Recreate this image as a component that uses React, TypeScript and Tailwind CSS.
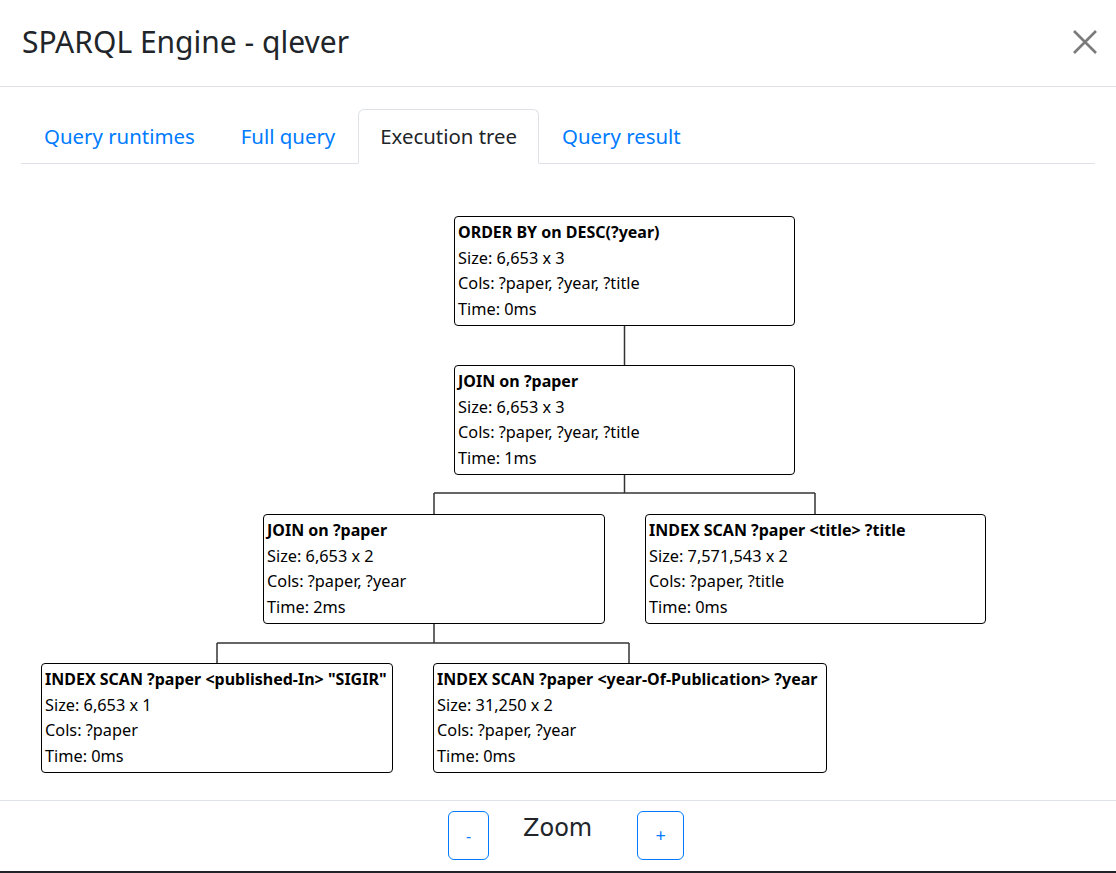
type TreeNode = {
  id: string;
  x: number;
  y: number;
  w: number;
  title: string;
  size: string;
  cols: string;
  time: string;
};

// positions are page-x and canvas-y (canvas starts right under the tab bar)
const nodes: TreeNode[] = [
  { id: "order", x: 454, y: 52, w: 341, title: "ORDER BY on DESC(?year)", size: "6,653 x 3", cols: "?paper, ?year, ?title", time: "0ms" },
  { id: "join1", x: 454, y: 201, w: 341, title: "JOIN on ?paper", size: "6,653 x 3", cols: "?paper, ?year, ?title", time: "1ms" },
  { id: "join2", x: 263, y: 350, w: 342, title: "JOIN on ?paper", size: "6,653 x 2", cols: "?paper, ?year", time: "2ms" },
  { id: "scan1", x: 645, y: 350, w: 341, title: "INDEX SCAN ?paper <title> ?title", size: "7,571,543 x 2", cols: "?paper, ?title", time: "0ms" },
  { id: "scan2", x: 41, y: 499, w: 352, title: 'INDEX SCAN ?paper <published-In> "SIGIR"', size: "6,653 x 1", cols: "?paper", time: "0ms" },
  { id: "scan3", x: 433, y: 499, w: 394, title: "INDEX SCAN ?paper <year-Of-Publication> ?year", size: "31,250 x 2", cols: "?paper, ?year", time: "0ms" },
];

const tabs = ["Query runtimes", "Full query", "Execution tree", "Query result"];

function Node({ n }: { n: TreeNode }) {
  return (
    <div
      className="absolute box-border h-[110px] rounded-[4px] border border-black bg-white px-[3px] py-[3px] text-[16.3px] leading-[25.6px] text-black whitespace-nowrap"
      style={{ left: n.x, top: n.y, width: n.w }}
    >
      <div className="font-bold text-[16px]">{n.title}</div>
      <div>Size: {n.size}</div>
      <div>Cols: {n.cols}</div>
      <div>Time: {n.time}</div>
    </div>
  );
}

function Connectors() {
  const lines = [
    [624.5, 161, 624.5, 201],
    [624.5, 310, 624.5, 329],
    [434, 329, 815, 329],
    [434, 329, 434, 350],
    [815, 329, 815, 350],
    [434, 460, 434, 479],
    [217, 479, 629, 479],
    [217, 479, 217, 499],
    [629, 479, 629, 499],
  ];
  return (
    <svg className="absolute left-0 top-0" width="1116" height="636">
      {lines.map((l, i) => (
        <line key={i} x1={l[0]} y1={l[1]} x2={l[2]} y2={l[3]} stroke="#333" strokeWidth="1.5" />
      ))}
    </svg>
  );
}

export default function App() {
  return (
    <div className="w-[1116px] h-[873px] bg-white font-['Noto_Sans',sans-serif] text-[#212529] flex flex-col border-b-2 border-[#212529] box-border overflow-hidden">
      <div className="h-[87px] shrink-0 border-b border-[#dee2e6] flex items-center justify-between pl-[22px] pr-[18px]">
        <h1 className="text-[30px] font-normal leading-none -mt-[2px]">SPARQL Engine - qlever</h1>
        <svg width="26" height="26" viewBox="0 0 26 26" className="-mt-[2px]">
          <path d="M2 2 L24 24 M24 2 L2 24" stroke="#7b7b7b" strokeWidth="2.6" />
        </svg>
      </div>

      <div className="px-[21px] pt-[22px] shrink-0">
        <ul className="flex border-b border-[#dee2e6] h-[55px]">
          {tabs.map((t) => {
            const active = t === "Execution tree";
            return (
              <li key={t} className="-mb-px">
                {active ? (
                  <div className="h-[55px] px-[21px] flex items-center text-[20.4px] text-[#212529] bg-white border border-[#dee2e6] border-b-white rounded-t-[6px]">
                    {t}
                  </div>
                ) : (
                  <div className="h-[55px] px-[22px] flex items-center text-[20.4px] text-[#007bff] border border-transparent">
                    {t}
                  </div>
                )}
              </li>
            );
          })}
        </ul>
      </div>

      <div className="relative h-[636px] shrink-0">
        <Connectors />
        {nodes.map((n) => (
          <Node key={n.id} n={n} />
        ))}
      </div>

      <div className="flex-1 border-t border-[#dee2e6] flex items-start pl-[448px] pt-[10px]">
        <button className="w-[41px] h-[49px] rounded-[6px] border border-[#007bff] text-[#007bff] text-[16px] flex items-center justify-center">
          -
        </button>
        <div className="ml-[34px] mt-[1px] text-[24px] leading-[32px] font-['DejaVu_Sans',sans-serif] text-[#212529]">Zoom</div>
        <button className="ml-[45px] w-[47px] h-[49px] rounded-[6px] border border-[#007bff] text-[#007bff] text-[18px] flex items-center justify-center">
          +
        </button>
      </div>
    </div>
  );
}
